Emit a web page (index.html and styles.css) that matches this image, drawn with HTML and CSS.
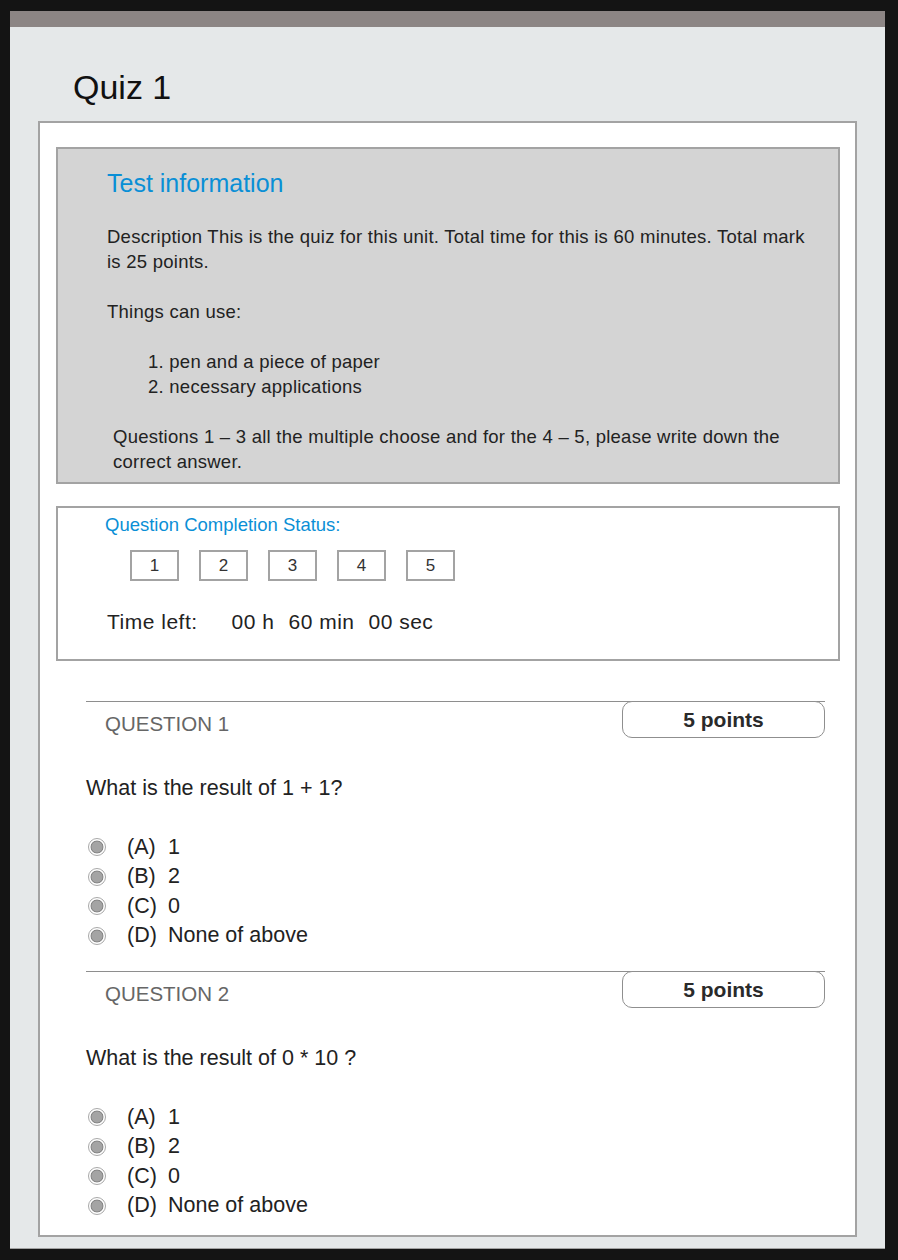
FILE: index.html
```html
<!DOCTYPE html>
<html lang="en">
<head>
<meta charset="utf-8">
<title>Quiz 1</title>
<link rel="stylesheet" href="styles.css">
</head>
<body>
<div class="frame">
  <div class="topbar"></div>
  <div class="content">
    <h1 class="title">Quiz 1</h1>
    <div class="card">
      <section class="info">
        <h2 class="info-title">Test information</h2>
        <p class="info-text">Description This is the quiz for this unit. Total time for this is 60 minutes. Total mark is 25 points.</p>
        <p class="info-text">Things can use:</p>
        <ol class="info-list">
          <li>pen and a piece of paper</li>
          <li>necessary applications</li>
        </ol>
        <p class="info-text info-note">Questions 1 – 3 all the multiple choose and for the 4 – 5, please write down the correct answer.</p>
      </section>

      <section class="status">
        <div class="status-title">Question Completion Status:</div>
        <div class="status-boxes">
          <span class="status-box">1</span>
          <span class="status-box">2</span>
          <span class="status-box">3</span>
          <span class="status-box">4</span>
          <span class="status-box">5</span>
        </div>
        <div class="time">
          <span class="time-label">Time left:</span>
          <span>00 h</span>
          <span>60 min</span>
          <span>00 sec</span>
        </div>
      </section>

      <div class="questions">
        <section class="question">
          <div class="question-head">
            <span class="question-label">QUESTION 1</span>
            <span class="points">5 points</span>
          </div>
          <div class="question-text">What is the result of 1 + 1?</div>
          <ul class="options">
            <li><span class="radio"></span><span class="opt-key">(A)</span>1</li>
            <li><span class="radio"></span><span class="opt-key">(B)</span>2</li>
            <li><span class="radio"></span><span class="opt-key">(C)</span>0</li>
            <li><span class="radio"></span><span class="opt-key">(D)</span>None of above</li>
          </ul>
        </section>
        <section class="question">
          <div class="question-head">
            <span class="question-label">QUESTION 2</span>
            <span class="points">5 points</span>
          </div>
          <div class="question-text">What is the result of 0 * 10 ?</div>
          <ul class="options">
            <li><span class="radio"></span><span class="opt-key">(A)</span>1</li>
            <li><span class="radio"></span><span class="opt-key">(B)</span>2</li>
            <li><span class="radio"></span><span class="opt-key">(C)</span>0</li>
            <li><span class="radio"></span><span class="opt-key">(D)</span>None of above</li>
          </ul>
        </section>
      </div>
    </div>
  </div>
</div>
</body>
</html>
```

FILE: styles.css
```css
* { box-sizing: border-box; }

body {
  margin: 0;
  background: #141414;
  font-family: "Liberation Sans", Arial, Helvetica, sans-serif;
  color: #222;
}

.frame {
  margin: 11px 0 0 10px;
  width: 875px;
  background: #e5e8e9;
  border-bottom: 1px solid #a2a2a2;
}

.topbar {
  height: 16px;
  background: #8c8584;
}

.content {
  padding-bottom: 11px;
}

.title {
  margin: 0 0 14px;
  padding: 40px 0 0 63px;
  font-size: 34px;
  line-height: 40px;
  font-weight: normal;
  color: #111;
}

.card {
  margin-left: 28px;
  width: 819px;
  background: #fff;
  border: 2px solid #a3a3a3;
  padding: 24px 15px 14.5px 16px;
}

/* info box */
.info {
  background: #d4d4d4;
  border: 2px solid #a3a3a3;
  padding: 19px 0 8.5px 49px;
}

.info-title {
  margin: 0 0 25.5px;
  font-size: 25px;
  line-height: 30px;
  font-weight: normal;
  color: #0a8fd6;
}

.info-text {
  margin: 0 0 25px;
  max-width: 710px;
  font-size: 18.5px;
  line-height: 25px;
  letter-spacing: 0.25px;
  color: #222;
}

.info-list {
  margin: 0 0 25px;
  padding-left: 41px;
  list-style-position: inside;
  font-size: 18.5px;
  line-height: 25px;
  letter-spacing: 0.25px;
}

.info-note {
  margin: 0;
  padding-left: 6px;
  max-width: 716px;
}

/* status */
.status {
  margin-top: 22px;
  border: 2px solid #a3a3a3;
  padding: 7px 0 25px 47px;
}

.status-title {
  font-size: 18.5px;
  line-height: 20px;
  color: #0a8fd6;
}

.status-boxes {
  display: flex;
  gap: 20px;
  margin: 15px 0 0 25px;
}

.status-box {
  width: 49px;
  height: 31px;
  border: 2px solid #a3a3a3;
  display: flex;
  align-items: center;
  justify-content: center;
  font-size: 17px;
  color: #333;
}

.time {
  display: flex;
  gap: 14px;
  margin: 29px 0 0 2px;
  font-size: 21px;
  line-height: 24px;
  letter-spacing: 0.5px;
  color: #222;
}

.time-label {
  margin-right: 20px;
}

/* questions */
.questions {
  margin: 40px 15px 0 30px;
}

.question + .question {
  margin-top: 20.5px;
}

.question-head {
  display: flex;
  justify-content: space-between;
  align-items: flex-start;
  height: 37px;
  border-top: 1px solid #8e8e8e;
}

.question-label {
  margin: 10px 0 0 19px;
  font-size: 20.5px;
  line-height: 24px;
  color: #666;
}

.points {
  width: 203px;
  height: 37px;
  margin-top: -1px;
  border: 1px solid #8f8f8f;
  border-radius: 10px;
  font-size: 21px;
  font-weight: bold;
  line-height: 35px;
  text-align: center;
  color: #2a2a2a;
  background: #fff;
}

.question-text {
  margin-top: 37px;
  font-size: 21.5px;
  line-height: 26px;
  color: #222;
}

.options {
  list-style: none;
  margin: 31.5px 0 0;
  padding: 0;
}

.options li {
  display: flex;
  align-items: center;
  height: 29.5px;
  font-size: 21.5px;
  color: #222;
}

.radio {
  width: 18px;
  height: 18px;
  margin: 0 21px 0 2px;
  border-radius: 50%;
  border: 1.5px solid #a8a8a8;
  background: radial-gradient(circle closest-side, #a4a4a4 0, #a4a4a4 5px, #808080 6px, #fff 6.8px, #fff 100%);
  flex: none;
}

.opt-key {
  width: 41px;
  flex: none;
}
```
